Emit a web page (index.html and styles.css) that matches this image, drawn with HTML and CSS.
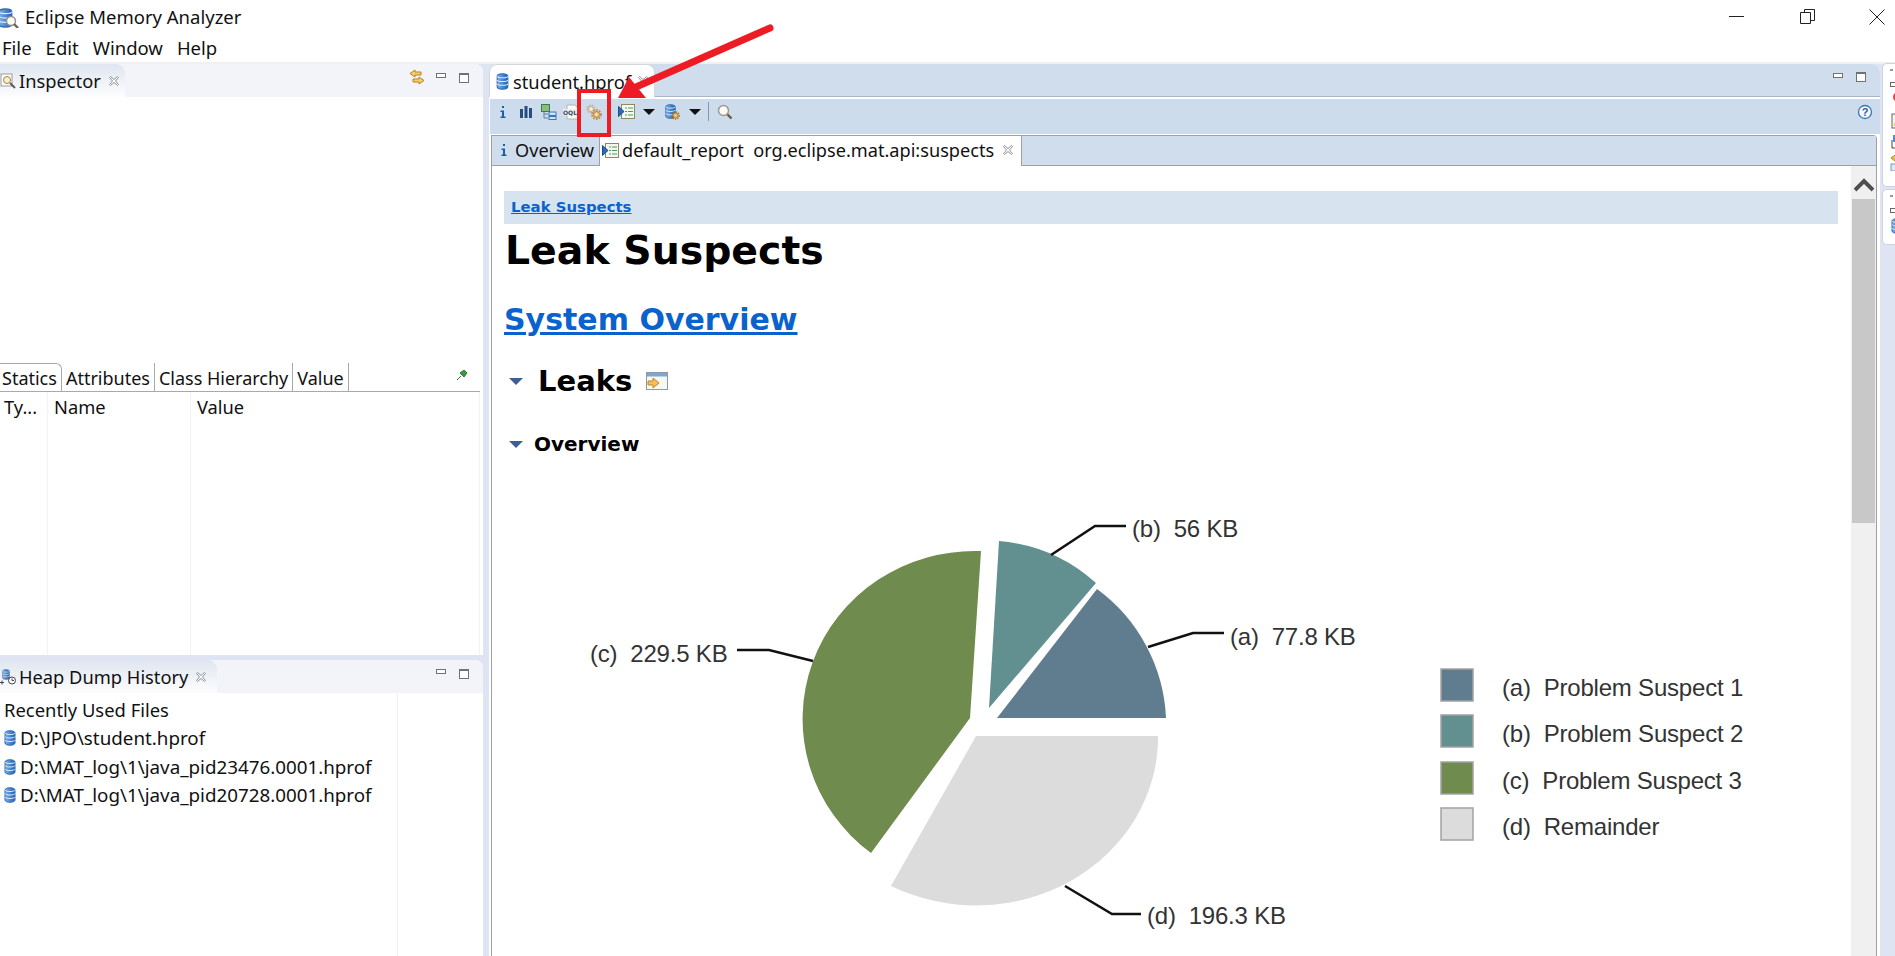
FILE: index.html
```html
<!DOCTYPE html>
<html lang="en">
<head>
    <meta charset="UTF-8">
    <meta name="viewport" content="width=device-width, initial-scale=1.0">
    <title>Eclipse Memory Analyzer</title>
    <link rel="stylesheet" href="styles.css">
</head>
<body>
    <svg class="sprites" xmlns="http://www.w3.org/2000/svg" width="0" height="0">
        <defs>
            <linearGradient id="dbFill" x1="0" y1="0" x2="1" y2="0">
                <stop offset="0" stop-color="#7fb0e6"/>
                <stop offset="1" stop-color="#1f62b5"/>
            </linearGradient>
            <symbol id="db" viewBox="0 0 12 16">
                <path d="M1 3c0-3 10-3 10 0v10c0 3-10 3-10 0z" fill="url(#dbFill)" stroke="#2a68b4"/>
                <path d="M1 3c0 2 10 2 10 0M1 6.500c0 2 10 2 10 0M1 10c0 2 10 2 10 0" fill="none" stroke="#dfeaf7"/>
            </symbol>
            <symbol id="report" viewBox="0 0 17 15">
                <rect x="3.500" y="0.500" width="13" height="14" fill="#f5f8ee" stroke="#8d8a62"/>
                <path d="M7 4h2M10 4h5M7 7.500h2M10 7.500h5M7 11h2M10 11h5" stroke="#4c9a5a"/>
                <path d="M0.500 2.500v10l5.500-5z" fill="#2a6ab8" stroke="#1d4a8c"/>
            </symbol>
            <symbol id="info" viewBox="0 0 8 14">
                <path d="M3 1h2v2H3zM1.500 5.500H5v6h1.500v1.500h-5v-1.500H3V7H1.500z" fill="#1f5ea6"/>
            </symbol>
            <symbol id="close" viewBox="0 0 12 12">
                <path d="M1.500 2.500l1-1L6 4.500l3.500-3 1 1L7.500 6l3 3.500-1 1L6 7.500l-3.500 3-1-1L4.500 6z" fill="#fff" stroke="#8b8f96"/>
            </symbol>
            <symbol id="magnifier" viewBox="0 0 16 16">
                <circle cx="6.500" cy="6.500" r="5" fill="#fdfdf4" stroke="#9a9a90" stroke-width="1.500"/>
                <path d="M10.500 10.500l4 4" stroke="#6b5a3c" stroke-width="2.400"/>
            </symbol>
        </defs>
    </svg>

    <div class="app">
        <header class="titlebar">
            <svg class="app-icon" viewBox="0 0 20 20" width="20" height="20">
                <use href="#db" x="-2" y="0" width="15" height="20"/>
                <circle cx="11" cy="13" r="4.500" fill="#fdfdf4" stroke="#8f8f88" stroke-width="1.400"/>
                <path d="M14 16l4 4" stroke="#66665f" stroke-width="2.400"/>
            </svg>
            <span class="app-title">Eclipse Memory Analyzer</span>
            <div class="window-buttons">
                <svg viewBox="0 0 46 36" width="46" height="36"><path d="M15 16.500h15" stroke="#222" fill="none"/></svg>
                <svg viewBox="0 0 46 36" width="46" height="36"><path d="M16.500 12.500h10v11h-10zM20.500 12.500v-3h10v11h-4" stroke="#222" fill="none"/></svg>
                <svg viewBox="0 0 46 36" width="46" height="36"><path d="M15.500 9.500l15 15M30.500 9.500l-15 15" stroke="#222" fill="none"/></svg>
            </div>
        </header>

        <nav class="menubar">
            <span>File</span>
            <span>Edit</span>
            <span>Window</span>
            <span>Help</span>
        </nav>

        <div class="workbench">
            <aside class="side">
                <section class="view inspector">
                    <div class="view-head">
                        <div class="view-tab view-tab-inspector">
                            <svg class="tab-icon" viewBox="0 0 16 16" width="16" height="16">
                                <rect x="1" y="1" width="11" height="12" fill="#fff" stroke="#9b9b9b"/>
                                <circle cx="7" cy="7" r="3.500" fill="#f6efd4" stroke="#a8863c"/>
                                <path d="M10 10l5 5" stroke="#5b5b5b" stroke-width="2"/>
                            </svg>
                            <span>Inspector</span>
                            <svg class="tab-close" width="12" height="12"><use href="#close"/></svg>
                        </div>
                        <div class="view-actions">
                            <svg class="sync" viewBox="0 0 16 16" width="16" height="16">
                                <path d="M6 1L1 4.500 6 8V6h6V3H6zM10 8l5 3.500-5 3.500v-2H4v-3h6z" fill="#f6cf6d" stroke="#b7811f"/>
                            </svg>
                            <span class="btn-min"></span>
                            <span class="btn-max"></span>
                        </div>
                    </div>
                    <div class="inspector-top"></div>
                    <div class="subtabs">
                        <span class="subtab subtab-on">Statics</span>
                        <span class="subtab">Attributes</span>
                        <span class="subtab">Class Hierarchy</span>
                        <span class="subtab subtab-last">Value</span>
                        <svg class="pin" viewBox="0 0 10 10" width="10" height="10">
                            <path d="M0 10l4-4M3 3l4-3 3 3-3 4z" fill="#3c9a3c" stroke="#2f7d2f"/>
                        </svg>
                    </div>
                    <div class="statics-table">
                        <div class="col col-type">Ty...</div>
                        <div class="col col-name">Name</div>
                        <div class="col col-value">Value</div>
                    </div>
                </section>

                <section class="view history">
                    <div class="view-head">
                        <div class="view-tab view-tab-history">
                            <svg class="tab-icon" viewBox="0 0 16 16" width="16" height="16">
                                <use href="#db" x="2" y="0" width="8" height="11"/>
                                <circle cx="12" cy="11.500" r="3.500" fill="#fff" stroke="#444"/>
                                <path d="M12 9.500v2h2M0 13.500h4M2 11.500v4" fill="none" stroke="#444"/>
                            </svg>
                            <span>Heap Dump History</span>
                            <svg class="tab-close" width="12" height="12"><use href="#close"/></svg>
                        </div>
                        <div class="view-actions">
                            <span class="btn-min"></span>
                            <span class="btn-max"></span>
                        </div>
                    </div>
                    <div class="history-list">
                        <div class="history-row history-title">Recently Used Files</div>
                        <div class="history-row"><svg width="12" height="16"><use href="#db"/></svg>D:\JPO\student.hprof</div>
                        <div class="history-row"><svg width="12" height="16"><use href="#db"/></svg>D:\MAT_log\1\java_pid23476.0001.hprof</div>
                        <div class="history-row"><svg width="12" height="16"><use href="#db"/></svg>D:\MAT_log\1\java_pid20728.0001.hprof</div>
                    </div>
                </section>
            </aside>

            <main class="editor">
                <div class="editor-head">
                    <div class="editor-tab">
                        <svg width="13" height="17"><use href="#db" width="13" height="17"/></svg>
                        <span>student.hprof</span>
                        <svg class="tab-close" width="12" height="12"><use href="#close"/></svg>
                    </div>
                    <div class="view-actions">
                        <span class="btn-min"></span>
                        <span class="btn-max"></span>
                    </div>
                </div>

                <div class="toolbar">
                    <svg class="tool tool-info" width="8" height="14"><use href="#info"/></svg>
                    <svg class="tool tool-bars" viewBox="0 0 12 12" width="12" height="12">
                        <path d="M0 3h3v9H0zM4.500 0h3v12h-3zM9 2h3v10H9z" fill="#274f7d"/>
                    </svg>
                    <svg class="tool tool-tree" viewBox="0 0 16 16" width="16" height="16">
                        <rect x="0.500" y="0.500" width="8" height="7" fill="#8dbb7d" stroke="#3e7b4e"/>
                        <path d="M3 8v6h4M3 10h4" fill="none" stroke="#5f7f9f"/>
                        <rect x="8" y="8" width="7" height="3.500" fill="#cfe2f5" stroke="#3a78b5"/>
                        <rect x="8" y="12.500" width="7" height="3" fill="#cfe2f5" stroke="#3a78b5"/>
                    </svg>
                    <svg class="tool tool-oql" viewBox="0 0 16 16" width="16" height="16">
                        <path d="M4 1h8l3 3v11H4z" fill="#fbfbf6" stroke="#b6b6a8"/>
                        <rect x="0" y="5" width="14" height="6.500" fill="#eef1f4"/>
                        <text class="oql" x="0" y="11">OQL</text>
                    </svg>
                    <svg class="tool tool-gear" viewBox="0 0 16 16" width="16" height="16">
                        <circle cx="5" cy="5" r="3.800" fill="none" stroke="#c6b08a" stroke-width="1.600" stroke-dasharray="1.500 1.100"/>
                        <circle cx="5" cy="5" r="2.500" fill="#f4ecdb" stroke="#c2aa82"/>
                        <circle cx="10.500" cy="10.500" r="4.500" fill="none" stroke="#c68c35" stroke-width="1.800" stroke-dasharray="1.700 1.200"/>
                        <circle cx="10.500" cy="10.500" r="3" fill="#eac684" stroke="#b47c28"/>
                        <circle cx="10.500" cy="10.500" r="1.100" fill="#fbf4e2"/>
                    </svg>
                    <svg class="tool tool-report" width="17" height="15"><use href="#report"/></svg>
                    <span class="caret"></span>
                    <svg class="tool tool-dbgear" viewBox="0 0 16 16" width="16" height="16">
                        <use href="#db" x="0" y="0" width="13" height="15"/>
                        <circle cx="11.500" cy="11.500" r="3.600" fill="none" stroke="#a9701f" stroke-width="1.500" stroke-dasharray="1.400 1"/>
                        <circle cx="11.500" cy="11.500" r="2.400" fill="#f0c676" stroke="#a9701f" stroke-width="0.800"/>
                    </svg>
                    <span class="caret"></span>
                    <span class="tool-sep"></span>
                    <svg class="tool tool-search" width="16" height="16"><use href="#magnifier"/></svg>
                    <svg class="help" viewBox="0 0 16 16" width="16" height="16">
                        <circle cx="8" cy="8" r="6.500" fill="#f4f8fc" stroke="#3a78b0" stroke-width="1.300"/>
                        <text class="help-mark" x="8" y="11.500">?</text>
                    </svg>
                </div>

                <div class="pages">
                    <div class="page-tabs">
                        <div class="page-tab">
                            <svg width="8" height="14"><use href="#info"/></svg>
                            <span>Overview</span>
                        </div>
                        <div class="page-tab page-tab-on">
                            <svg width="17" height="15"><use href="#report"/></svg>
                            <span>default_report&nbsp; org.eclipse.mat.api:suspects</span>
                            <svg class="tab-close" width="12" height="12"><use href="#close"/></svg>
                        </div>
                    </div>

                    <div class="page-body">
                        <article class="report">
                            <div class="crumb"><a>Leak Suspects</a></div>
                            <h1>Leak Suspects</h1>
                            <h2 class="sys"><a>System Overview</a></h2>
                            <h3 class="leaks">
                                <span class="twist"></span>
                                <span>Leaks</span>
                                <svg viewBox="0 0 22 18" width="22" height="18">
                                    <rect x="0.500" y="0.500" width="21" height="17" fill="#f8f8f2" stroke="#8d9aa0"/>
                                    <rect x="1" y="1" width="20" height="3.500" fill="#7ea6cf"/>
                                    <path d="M2 9h5V6l6 5-6 5v-3H2z" fill="#f3be5e" stroke="#c08a2a"/>
                                </svg>
                            </h3>
                            <h4 class="over">
                                <span class="twist"></span>
                                <span>Overview</span>
                            </h4>

                            <svg class="chart" xmlns="http://www.w3.org/2000/svg" viewBox="504 470 1340 486" width="1340" height="486">
                                <path d="M997 718L1166 718A169 169 0 0 0 1097 589Z" fill="#607d8f"/>
                                <path d="M989 708L999 541A166 166 0 0 1 1096 583Z" fill="#629090"/>
                                <path d="M970 718L871 853A172 168 0 0 1 981 551Z" fill="#6f8b4e"/>
                                <path d="M976 736L1158 736A182 168 0 0 1 891 886Z" fill="#dcdcdc"/>
                                <g class="leader">
                                    <polyline points="1148,647 1193,633 1224,633"/>
                                    <polyline points="1051,555 1095,526 1126,526"/>
                                    <polyline points="813,661 769,650 737,650"/>
                                    <polyline points="1065,886 1112,914 1141,914"/>
                                </g>
                                <g class="chart-label">
                                    <text x="1230" y="645">(a)&#160; 77.8 KB</text>
                                    <text x="1132" y="537">(b)&#160; 56 KB</text>
                                    <text x="590" y="662">(c)&#160; 229.5 KB</text>
                                    <text x="1147" y="924">(d)&#160; 196.3 KB</text>
                                </g>
                                <g class="legend-swatch">
                                    <rect x="1441" y="669" width="32" height="32" fill="#607d8f"/>
                                    <rect x="1441" y="715" width="32" height="32" fill="#629090"/>
                                    <rect x="1441" y="762" width="32" height="32" fill="#6f8b4e"/>
                                    <rect x="1441" y="808" width="32" height="32" fill="#dcdcdc"/>
                                </g>
                                <g class="legend-text">
                                    <text x="1502" y="696">(a)&#160; Problem Suspect 1</text>
                                    <text x="1502" y="742">(b)&#160; Problem Suspect 2</text>
                                    <text x="1502" y="789">(c)&#160; Problem Suspect 3</text>
                                    <text x="1502" y="835">(d)&#160; Remainder</text>
                                </g>
                            </svg>
                        </article>
                        <div class="scrollbar">
                            <div class="scroll-up">
                                <svg viewBox="0 0 20 14" width="20" height="14"><path d="M1 12l9-9 9 9" fill="none" stroke="#4f4f4f" stroke-width="4"/></svg>
                            </div>
                            <div class="scroll-thumb"></div>
                        </div>
                    </div>
                </div>
            </main>

            <aside class="trim">
                <div class="trim-group trim-top">
                    <span class="trim-grip"></span>
                    <span class="trim-restore"></span>
                    <svg viewBox="0 0 10 16" width="10" height="16"><circle cx="8" cy="5" r="5" fill="#d8474b"/><path d="M5 12h1M8 14h1" stroke="#3a78b0" stroke-width="2"/></svg>
                    <svg viewBox="0 0 10 16" width="10" height="16"><rect x="2" y="1" width="12" height="14" fill="#f4f4f0" stroke="#666"/><rect x="4" y="10" width="8" height="3" fill="#ecc84e"/></svg>
                    <svg viewBox="0 0 10 16" width="10" height="16"><rect x="3" y="1" width="10" height="7" fill="#4a90d8"/><path d="M2 6v8h8" fill="none" stroke="#444"/></svg>
                    <svg viewBox="0 0 10 16" width="10" height="16"><path d="M1 3l4-3 5 0v6H5z" fill="#eebb55" stroke="#b78420"/><rect x="1" y="9" width="12" height="7" fill="#dceaf3" stroke="#7d9aae"/></svg>
                </div>
                <div class="trim-group trim-bottom">
                    <span class="trim-grip"></span>
                    <span class="trim-restore"></span>
                    <svg viewBox="0 0 10 16" width="10" height="16"><use href="#db" x="0" y="0" width="14" height="16"/></svg>
                </div>
            </aside>
        </div>

        <!-- red annotation drawn over the screenshot -->
        <svg class="annotation" xmlns="http://www.w3.org/2000/svg" viewBox="0 0 1895 956" width="1895" height="956">
            <rect x="579" y="91" width="30" height="44" fill="none" stroke="#ed1c24" stroke-width="4"/>
            <path d="M770 28L636 87" fill="none" stroke="#ed1c24" stroke-width="7" stroke-linecap="round"/>
            <path d="M618 98L629 77L646 98Z" fill="#ed1c24"/>
        </svg>
    </div>
</body>
</html>
```
FILE: styles.css
```css
* {
    box-sizing: border-box;
}
html, body {
    margin: 0;
    height: 100%;
    overflow: hidden;
}
body {
    font-family: "Noto Sans", "Noto Sans CJK SC", sans-serif;
    font-size: 18.300px;
    color: #111;
    background: #fff;
}
.sprites {
    position: absolute;
}
.app {
    position: relative;
    display: flex;
    flex-direction: column;
    width: 1895px;
    height: 956px;
    overflow: hidden;
}

/* title and menu */
.titlebar {
    display: flex;
    align-items: center;
    height: 35px;
    flex: none;
}
.app-icon {
    margin-right: 5px;
}
.app-title {
    margin-top: -2px;
    font-size: 18.500px;
}
.window-buttons {
    display: flex;
    gap: 24px;
    margin-left: auto;
    margin-right: -5px;
}
.menubar {
    display: flex;
    gap: 14px;
    align-items: center;
    height: 27px;
    padding: 0 0 2px 2px;
    flex: none;
    font-size: 18.500px;
}
.workbench {
    flex: 1;
    display: flex;
    min-height: 0;
    padding-top: 2px;
    background: linear-gradient(#f0f0f0 2px, #dfe4f3 2px);
}

/* left column */
.side {
    display: flex;
    flex-direction: column;
    width: 483px;
    gap: 5px;
    flex: none;
}
.view {
    display: flex;
    flex-direction: column;
    background: #fff;
    border-radius: 0 8px 0 0;
    overflow: hidden;
}
.inspector {
    height: 591px;
}
.history {
    flex: 1;
}
.view-head, .editor-head {
    display: flex;
    align-items: stretch;
    height: 33px;
    flex: none;
    background: #f2f4fa;
}
.view-tab {
    display: flex;
    align-items: center;
    gap: 3px;
    border-radius: 0 9px 0 0;
    background: linear-gradient(#dfe6f0, #fdfdfe);
    white-space: nowrap;
}
.view-tab-inspector {
    width: 125px;
}
.view-tab-history {
    width: 217px;
}
.tab-icon {
    flex: none;
}
.tab-close {
    flex: none;
    margin-left: 4px;
}
.view-actions {
    display: flex;
    align-items: center;
    gap: 13px;
    margin-left: auto;
    padding-right: 14px;
    padding-bottom: 6px;
}
.sync {
    margin-right: -2px;
    margin-bottom: 2px;
}
.btn-min {
    width: 10px;
    height: 5px;
    border: 1px solid #6e7176;
    background: #fff;
    margin-bottom: 4px;
}
.btn-max {
    width: 10px;
    height: 10px;
    border: 1px solid #6e7176;
    border-top-width: 2px;
    background: #fff;
}
.inspector-top {
    height: 266px;
    flex: none;
}
.subtabs {
    display: flex;
    align-items: center;
    height: 29px;
    flex: none;
    margin-right: 3px;
    border-bottom: 1px solid #a9a9a9;
    font-size: 18px;
}
.subtab {
    display: flex;
    align-items: center;
    height: 28px;
    padding: 1px 4px 0 4px;
    border-right: 1px solid #a9a9a9;
}
.subtab-on {
    padding-left: 2px;
    border-top: 1px solid #a9a9a9;
    border-radius: 0 6px 0 0;
}
.pin {
    margin-left: auto;
    margin-right: 13px;
    margin-bottom: 4px;
}
.statics-table {
    flex: 1;
    display: grid;
    grid-template-columns: 48px 143px 1fr;
    margin-right: 3px;
}
.col {
    height: 100%;
    padding: 2px 0 0 6px;
    border-right: 1px solid #eef2f9;
}
.col-type {
    padding-left: 4px;
}
.history-list {
    flex: 1;
    width: 398px;
    padding-top: 3px;
    border-right: 1px solid #eef0f5;
}
.history-row {
    display: flex;
    align-items: center;
    gap: 4px;
    height: 28.300px;
    padding-left: 4px;
    white-space: nowrap;
    font-size: 18.800px;
}
.history-title {
    padding-bottom: 2px;
    font-size: 18.400px;
}

/* editor */
.editor {
    display: flex;
    flex-direction: column;
    width: 1391px;
    margin-left: 6px;
    flex: none;
    background: #fff;
    border-radius: 8px 8px 0 0;
    overflow: hidden;
}
.editor-head {
    background: #cfdded;
    border-bottom: 1px solid #a9b6c8;
}
.editor-tab {
    display: flex;
    align-items: center;
    gap: 4px;
    width: 166px;
    height: 33px;
    padding-left: 6px;
    background: #fff;
    border-radius: 8px 8px 0 0;
    border: 1px solid #d4d8de;
    border-bottom: none;
    white-space: nowrap;
}
.editor-tab .tab-close {
    margin-left: 2px;
}
.toolbar {
    display: flex;
    align-items: center;
    height: 35px;
    margin: 2px 0 0 1px;
    padding: 0 0 10px 9px;
    flex: none;
    background: #cddcec;
}
.tool {
    flex: none;
}
.tool-bars {
    margin-left: 13px;
}
.tool-tree {
    margin-left: 9px;
}
.tool-oql {
    margin-left: 6px;
}
.tool-gear {
    margin-left: 7px;
}
.tool-report {
    margin-left: 16px;
}
.tool-dbgear {
    margin-left: 9px;
}
.caret {
    width: 0;
    height: 0;
    border: 6px solid transparent;
    border-top: 6px solid #111;
    border-bottom: none;
    margin-left: 8px;
}
.tool-dbgear + .caret {
    margin-left: 9px;
}
.tool-sep {
    width: 1px;
    height: 19px;
    margin-left: 7px;
    background: #8c96a0;
}
.tool-search {
    margin-left: 8px;
}
.oql {
    font: bold 6px "DejaVu Sans", sans-serif;
    fill: #33475c;
}
.help {
    margin-left: auto;
    margin-right: 7px;
}
.help-mark {
    font: bold 11px "Liberation Sans", sans-serif;
    fill: #2d5f96;
    text-anchor: middle;
}
.pages {
    flex: 1;
    display: flex;
    flex-direction: column;
    min-height: 0;
    margin: 1px 3px 0 2px;
    border: 1px solid #a0a0a0;
    border-bottom: none;
    border-radius: 0 4px 0 0;
}
.page-tabs {
    display: flex;
    height: 30px;
    flex: none;
    background: #cfdded;
    border-bottom: 1px solid #a0a0a0;
    font-size: 18.150px;
}
.page-tab {
    display: flex;
    align-items: center;
    gap: 7px;
    width: 108px;
    padding: 0 0 2px 8px;
    border-right: 1px solid #a0a0a0;
    white-space: nowrap;
}
.page-tab-on {
    width: 422px;
    height: 30px;
    gap: 3px;
    padding-left: 2px;
    background: #fff;
}
.page-tab-on .tab-close {
    margin-left: 5px;
}
.page-body {
    flex: 1;
    display: flex;
    min-height: 0;
}
.report {
    flex: 1;
    padding: 25px 13px 0 12px;
    font-family: "DejaVu Sans", Verdana, sans-serif;
    font-weight: bold;
    overflow: hidden;
}
.crumb {
    height: 33px;
    padding: 7px 0 0 7px;
    font-size: 14.900px;
    line-height: 18px;
    background: #d7e4f0;
}
a {
    color: #0a62cc;
    text-decoration: underline;
}
h1 {
    margin: 4px 0 0 1px;
    font-size: 39.400px;
    line-height: 44px;
    color: #000;
}
.sys {
    margin: 29px 0 0;
    font-size: 30px;
    line-height: 38px;
}
.leaks {
    display: flex;
    align-items: center;
    gap: 15px;
    margin: 23px 0 0 5px;
    font-size: 29px;
    line-height: 38px;
    color: #000;
}
.leaks svg {
    margin-left: -1px;
}
.over {
    display: flex;
    align-items: center;
    gap: 11px;
    margin: 31px 0 0 5px;
    font-size: 20px;
    line-height: 26px;
    color: #000;
}
.twist {
    width: 0;
    height: 0;
    border: 7px solid transparent;
    border-top: 7px solid #3c5f92;
    border-bottom: none;
    flex: none;
}
.chart {
    display: block;
    margin: 13px 0 0;
}
.leader polyline {
    fill: none;
    stroke: #111;
    stroke-width: 2.500;
}
.chart-label text, .legend-text text {
    font: 400 24px "Liberation Sans", sans-serif;
    fill: #333;
    letter-spacing: -0.200px;
}
.legend-swatch rect {
    stroke: #a3a3a3;
    stroke-width: 1.500;
}
.scrollbar {
    width: 25px;
    flex: none;
    background: #f0f0f0;
}
.scroll-up {
    display: flex;
    justify-content: center;
    padding-top: 12px;
    height: 33px;
}
.scroll-thumb {
    height: 324px;
    margin: 0 1px;
    background: #c8c8c8;
}

/* trim on the right */
.trim {
    flex: 1;
    display: flex;
    flex-direction: column;
    gap: 2px;
    padding-left: 2px;
    margin-top: -1px;
}
.trim-group {
    display: flex;
    flex-direction: column;
    gap: 5px;
    align-items: flex-start;
    background: #fff;
    border: 1px solid #cdd3e0;
    border-right: none;
    border-radius: 5px 0 0 5px;
    padding: 5px 0 0 7px;
    overflow: hidden;
}
.trim-top {
    height: 124px;
}
.trim-bottom {
    height: 56px;
}
.trim-grip {
    width: 10px;
    height: 2px;
    border-left: 3px solid #999;
    border-right: 3px solid #999;
}
.trim-restore {
    width: 9px;
    height: 5px;
    margin-top: 6px;
    border: 1px solid #666;
}

/* annotation */
.annotation {
    position: absolute;
    top: 0;
    left: 0;
    pointer-events: none;
}
```
